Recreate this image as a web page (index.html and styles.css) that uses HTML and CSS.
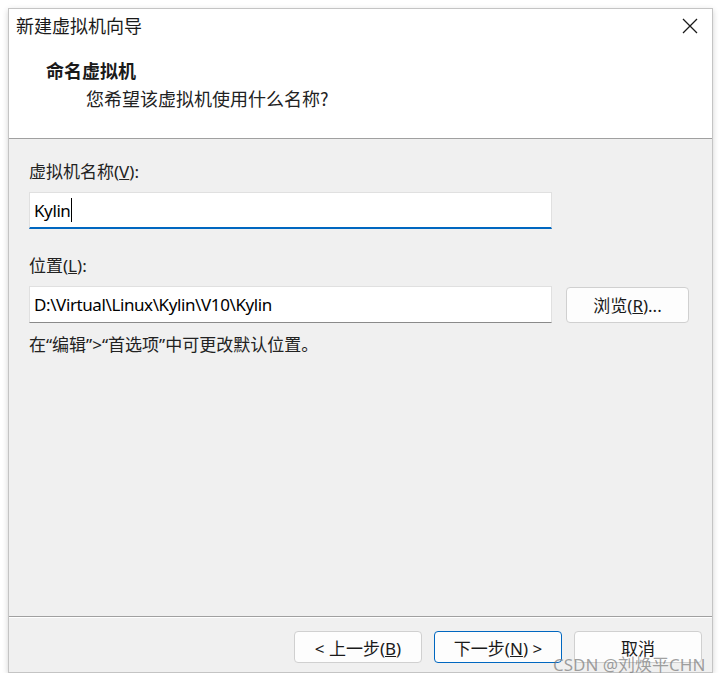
FILE: index.html
```html
<!DOCTYPE html>
<html lang="zh-CN">
<head>
  <meta charset="UTF-8">
  <meta name="viewport" content="width=device-width, initial-scale=1.0">
  <title>新建虚拟机向导</title>
  <link rel="stylesheet" href="styles.css">
</head>
<body>
  <div class="window">
    <div class="titlebar">
      <span class="title">新建虚拟机向导</span>
      <span class="close">
        <svg width="16" height="16" viewBox="0 0 16 16"><path d="M1 1 L15 15 M15 1 L1 15" stroke="#1a1a1a" stroke-width="1.3" fill="none"/></svg>
      </span>
    </div>

    <div class="header">
      <div class="step-title">命名虚拟机</div>
      <div class="step-desc">您希望该虚拟机使用什么名称?</div>
    </div>

    <div class="content">
      <div class="field">
        <label for="vmname">虚拟机名称(<u>V</u>):</label>
        <div class="input focused" id="vmname">Kylin<span class="caret"></span></div>
      </div>
      <div class="field">
        <label for="location">位置(<u>L</u>):</label>
        <div class="row">
          <div class="input" id="location">D:\Virtual\Linux\Kylin\V10\Kylin</div>
          <button class="btn browse">浏览(<u>R</u>)...</button>
        </div>
      </div>
      <p class="hint">在“编辑”&gt;“首选项”中可更改默认位置。</p>
    </div>

    <div class="footer">
      <button class="btn">&lt; 上一步(<u>B</u>)</button>
      <button class="btn primary">下一步(<u>N</u>) &gt;</button>
      <button class="btn">取消</button>
    </div>
  </div>
  <div class="watermark">CSDN @刘焕平CHN</div>
</body>
</html>
```

FILE: styles.css
```css
body {
  margin: 0;
  background: #fff;
  font-family: "Noto Sans", "Noto Sans CJK SC", sans-serif;
  color: #1a1a1a;
}

.window {
  position: relative;
  margin: 8px 0 0 8px;
  width: 703px;
  height: 663px;
  border: 1px solid #c4c4c4;
  box-shadow: 0 2px 6px rgba(0, 0, 0, 0.18);
  display: flex;
  flex-direction: column;
  background: #f0f0f0;
}

.titlebar {
  height: 37px;
  background: #fff;
  display: flex;
  align-items: center;
  justify-content: space-between;
  padding: 0 14px 0 7px;
}

.title {
  font-family: "Noto Sans CJK SC", sans-serif;
  font-size: 18px;
  margin-top: -5px;
}

.close {
  display: flex;
  margin-top: -4px;
}

.header {
  background: #fff;
  height: 92px;
  border-bottom: 1px solid #a0a0a0;
  padding-left: 37px;
}

.step-title {
  font-family: "Noto Sans CJK SC", serif;
  font-weight: bold;
  font-size: 18px;
  line-height: 24px;
  margin-top: 12px;
}

.step-desc {
  font-family: "Noto Sans CJK SC", serif;
  font-size: 18px;
  line-height: 24px;
  margin-top: 4px;
  padding-left: 40px;
  color: #222;
}

.content {
  flex: 1;
  padding: 22px 0 0 20px;
  border-bottom: 1px solid #a0a0a0;
}

.field label {
  display: block;
  font-size: 17px;
  line-height: 22px;
  color: #222;
  margin-bottom: 9px;
}

.field {
  margin-bottom: 26px;
}

.input {
  box-sizing: border-box;
  width: 523px;
  height: 37px;
  background: #fff;
  border: 1px solid #e0e0e0;
  border-bottom: 1px solid #8a8a8a;
  font-size: 17px;
  letter-spacing: -0.4px;
  line-height: 33px;
  padding-left: 4px;
  color: #000;
  display: flex;
  align-items: center;
}

.input.focused {
  border-bottom: 2px solid #0067c0;
}

.caret {
  display: inline-block;
  width: 1px;
  height: 24px;
  background: #000;
  margin-left: 1px;
}

.row {
  display: flex;
  align-items: center;
  gap: 14px;
}

.hint {
  margin: -15px 0 0;
  font-size: 17px;
  line-height: 22px;
  color: #222;
}

.btn {
  box-sizing: border-box;
  height: 32px;
  width: 128px;
  background: #fdfdfd;
  border: 1px solid #d0d0d0;
  border-radius: 4px;
  font-family: "Noto Sans", "Noto Sans CJK SC", sans-serif;
  font-size: 17px;
  color: #1a1a1a;
  padding: 0;
}

.browse {
  width: 123px;
  height: 36px;
}

.btn.primary {
  border-color: #0067c0;
}

.footer {
  height: 55px;
  border-top: 1px solid #fff;
  display: flex;
  justify-content: flex-end;
  align-items: flex-start;
  gap: 12px;
  padding: 13px 10px 0 0;
  box-sizing: border-box;
}

.watermark {
  position: absolute;
  left: 553px;
  top: 651px;
  font-size: 17px;
  color: rgba(120, 120, 120, 0.7);
}
```
